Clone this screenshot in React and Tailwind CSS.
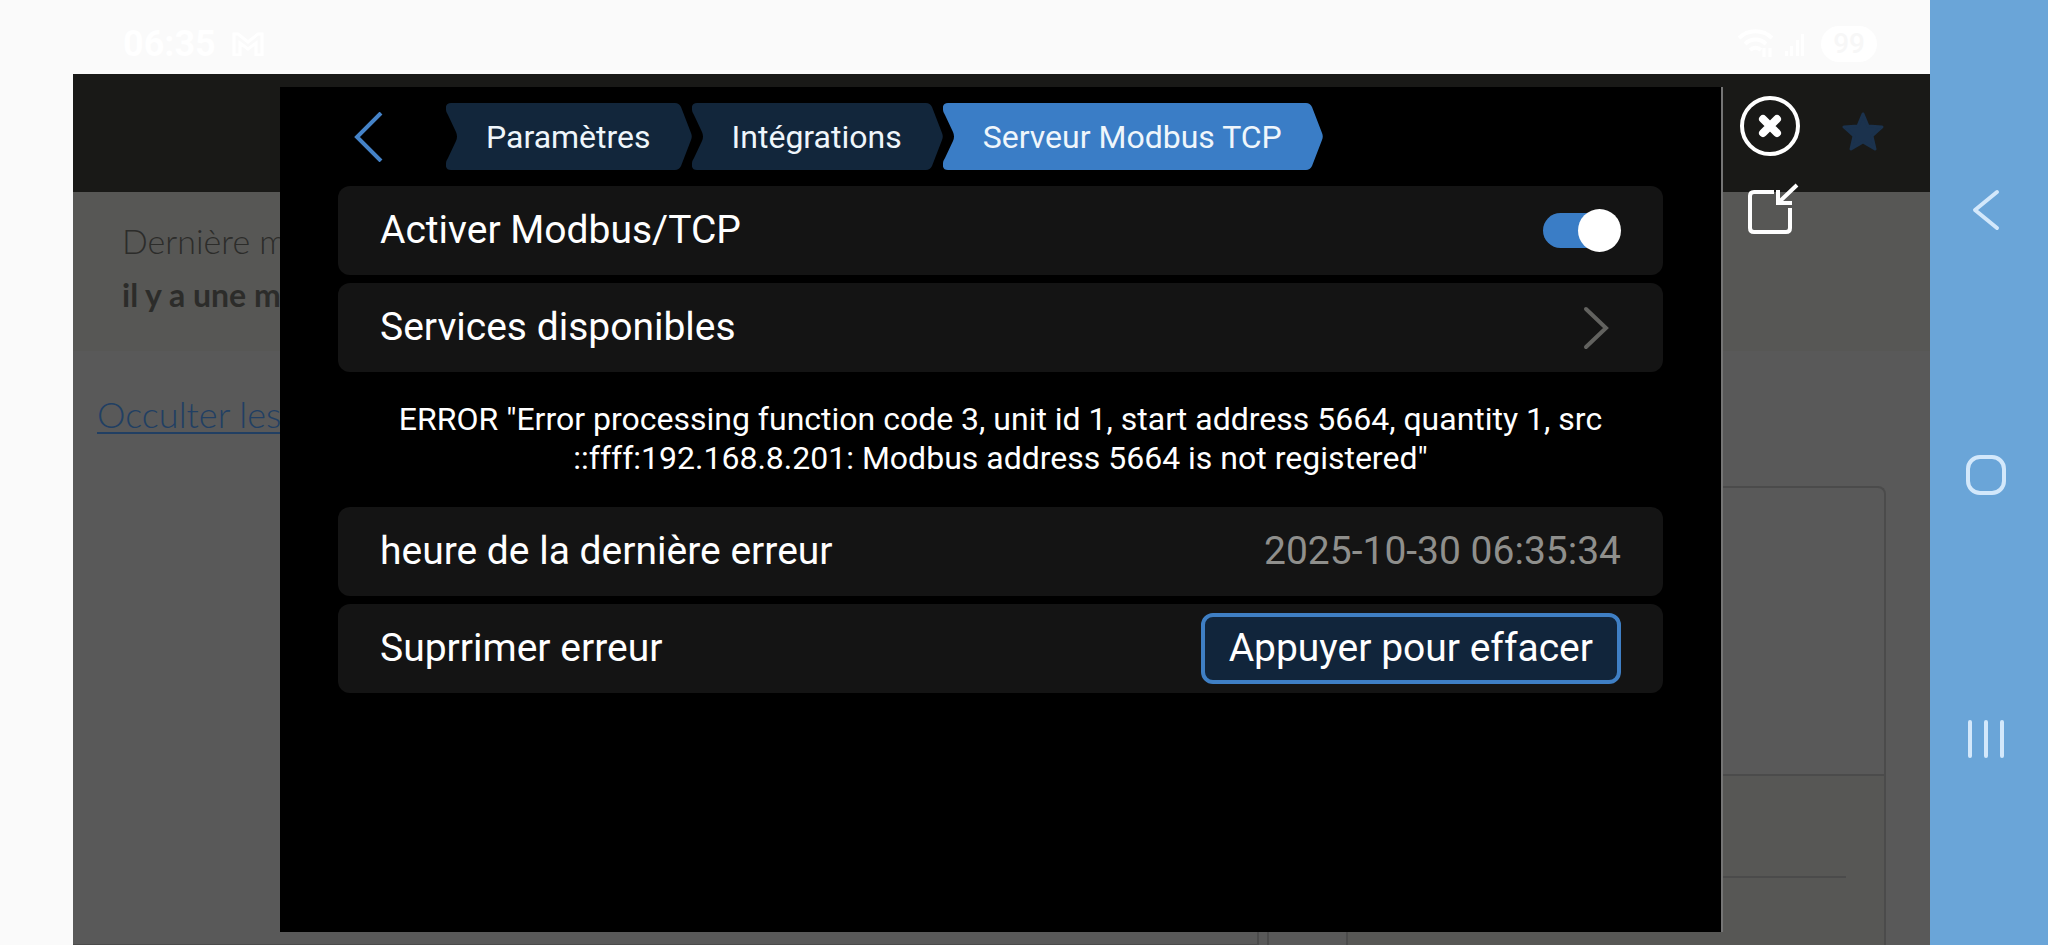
import { useState } from 'react';

const CRUMBS = ['Paramètres', 'Intégrations', 'Serveur Modbus TCP'];

const ERROR_TEXT =
  'ERROR "Error processing function code 3, unit id 1, start address 5664, quantity 1, src ::ffff:192.168.8.201: Modbus address 5664 is not registered"';

export default function App() {
  return (
    <div className="flex h-screen overflow-hidden bg-[#fafafa] font-[Roboto,sans-serif] text-white">
      <div className="flex min-w-0 flex-1 flex-col">
        <StatusBar />
        <main className="relative ml-[73px] min-h-0 flex-1 overflow-hidden">
          <PortalPage />
          <div className="absolute inset-0 flex pt-[13px] pb-[13px] pl-[207px]">
            <SettingsDialog />
            <WindowControls />
          </div>
        </main>
      </div>
      <AndroidNav />
    </div>
  );
}

function StatusBar() {
  return (
    <header className="flex h-[74px] shrink-0 items-center justify-between pt-3.5 pr-[53px] pl-[123px]">
      <div className="flex items-center gap-4">
        <span className="text-[36px] leading-8 font-bold">06:35</span>
        <svg className="h-6 w-8" viewBox="0 0 32 24" fill="none" stroke="currentColor" strokeWidth="3">
          <path d="M2 23V2h4l10 8 10-8h4v21h-6V11l-8 6-8-6v12z" />
        </svg>
      </div>
      <div className="flex items-center">
        <svg className="h-8 w-10" viewBox="0 0 40 32" fill="none" stroke="currentColor" strokeWidth="4">
          <path d="M2 10c9-9 24-9 33 0M8 16c6-6 15-6 21 0M13 22c3-3 8-3 11 0" />
          <path d="M27 20v9M33 29v-9" strokeWidth="3" />
        </svg>
        <svg className="ml-2 h-6 w-5" viewBox="0 0 20 24" fill="currentColor">
          <path d="M0 19h3v5H0zM5 14h3v10H5zM11 8h3v16h-3zM16 2h3v22h-3z" />
        </svg>
        <span className="ml-4 rounded-full bg-white px-3 py-0.5 text-[28px] leading-8 font-medium text-[#f7f7f7]">
          99
        </span>
      </div>
    </header>
  );
}

// Dimmed page behind the dialog
function PortalPage() {
  return (
    <div className="flex h-full flex-col bg-[#595959] font-[Lato,sans-serif] text-[32px] text-[#2c2c2a]">
      <div className="flex h-[118px] shrink-0 items-center justify-end bg-[#191917] pr-[46px] pb-1">
        <svg className="h-10 w-[42px]" viewBox="0 0 42 40" fill="#1b324d" stroke="#1b324d" strokeWidth="3" strokeLinejoin="round">
          <path d="M21 3l5 12 14 1-10 9 3 13-12-7-12 7 3-13L2 16l14-1z" />
        </svg>
      </div>
      <div className="h-[159px] shrink-0 bg-[#575755] pt-[22px] pl-[49px] leading-[54px]">
        <p className="text-[34px] leading-[54px] font-light">Dernière m</p>
        <p className="font-bold">il y a une m</p>
      </div>
      <div className="h-[94px] shrink-0 pt-9 pl-6 text-[36px] leading-[54px]">
        <a href="#occulter" className="font-light text-[#213f63] underline decoration-2 underline-offset-4">
          Occulter les
        </a>
      </div>
      <div className="mt-[41px] flex min-h-0 flex-1 justify-end gap-2 pr-11">
        <div className="flex-1 border-r-2 border-b border-[#4b4b4b]" />
        <div className="flex w-[619px] rounded-tr-lg border-2 border-b-0 border-[#4b4b4b]">
          <div className="w-[77px]" />
          <div className="flex flex-1 flex-col border-l-2 border-[#4b4b4b]">
            <div className="h-[286px]" />
            <div className="flex-1 border-t-2 border-[#4b4b4b] bg-[#575755] pr-[38px]">
              <div className="h-[102px] border-b-2 border-[#4b4b4b]" />
            </div>
          </div>
        </div>
      </div>
    </div>
  );
}

function SettingsDialog() {
  const [enabled, setEnabled] = useState(true);

  return (
    <section role="dialog" aria-label="Serveur Modbus TCP" className="min-w-0 flex-1 border-r-2 border-[#757575] bg-black px-[58px] pt-4">
      <nav className="flex items-center">
        <button type="button" aria-label="Retour" className="mr-[60px] ml-4 text-[#4583c8]">
          <svg className="h-[50px] w-8" viewBox="0 0 32 50" fill="none" stroke="currentColor" strokeWidth="4">
            <path d="M27 1L3 25l24 24" />
          </svg>
        </button>
        {CRUMBS.map((name, i) => (
          <Crumb key={name} name={name} active={i === CRUMBS.length - 1} />
        ))}
      </nav>

      <div className="mt-4 space-y-2">
        <Row>
          <label htmlFor="modbus-enabled">Activer Modbus/TCP</label>
          <span className="relative flex h-[43px] w-[78px] items-center">
            <input
              id="modbus-enabled"
              type="checkbox"
              checked={enabled}
              onChange={(e) => setEnabled(e.target.checked)}
              className="peer h-[35px] w-[70px] cursor-pointer appearance-none rounded-full bg-[#444] checked:bg-[#3a7dc6]"
            />
            <span className="pointer-events-none absolute left-0 size-[43px] rounded-full bg-white peer-checked:right-0 peer-checked:left-auto" />
          </span>
        </Row>
        <button type="button" className="block w-full text-left">
          <Row>
            <span>Services disponibles</span>
            <svg className="mr-3 h-11 w-[26px]" viewBox="0 0 26 44" fill="none" stroke="#62625f" strokeWidth="4" strokeLinecap="round">
              <path d="M3 3l20 19L3 41" />
            </svg>
          </Row>
        </button>
      </div>

      <p className="px-[43px] pt-7 pb-[29px] text-center text-[32px] leading-[39px]">{ERROR_TEXT}</p>

      <div className="space-y-2">
        <Row>
          <span>heure de la dernière erreur</span>
          <time dateTime="2025-10-30T06:35:34" className="text-[#8f8f8c]">
            2025-10-30 06:35:34
          </time>
        </Row>
        <Row>
          <span>Suprrimer erreur</span>
          <button type="button" className="h-[71px] rounded-xl border-4 border-[#3f7fc4] bg-[#11253b] px-6">
            Appuyer pour effacer
          </button>
        </Row>
      </div>
    </section>
  );
}

function Row({ children }) {
  return (
    <div className="flex h-[89px] items-center justify-between rounded-xl bg-[#141414] px-[42px] text-[39px]">
      {children}
    </div>
  );
}

// Arrow shaped breadcrumb: notched left cap, flat middle, pointed right cap
function Crumb({ name, active }) {
  return (
    <a href="#menu" className={`flex h-[67px] ${active ? 'text-[#3a7dc6]' : 'text-[#12263b]'}`}>
      <svg className="h-full w-4" viewBox="0 0 16 67" fill="currentColor">
        <path d="M16 0H5Q-1 0 0 7Q0 9 2 12L10 29Q12 33.500 10 38L2 55Q0 58 0 60Q-1 67 5 67H16z" />
      </svg>
      <span className="flex items-center bg-current px-6 text-[32px]">
        <span className="text-[#eff6fb]">{name}</span>
      </span>
      <svg className="h-full w-[17px]" viewBox="0 0 17 67" fill="currentColor">
        <path d="M0 0Q4 0 6 4L16 30Q17.500 33.500 16 37L6 63Q4 67 0 67z" />
      </svg>
    </a>
  );
}

function WindowControls() {
  return (
    <div className="flex w-[207px] shrink-0 flex-col items-start gap-[26px] pt-2 pl-4">
      <button type="button" aria-label="Fermer">
        <svg className="size-[62px]" viewBox="0 0 62 62" fill="none" stroke="currentColor">
          <circle cx="31" cy="31" r="28" strokeWidth="4" />
          <path d="M24 24l14 14M38 24L24 38" strokeWidth="8" strokeLinecap="round" />
        </svg>
      </button>
      <button type="button" aria-label="Réduire" className="ml-2">
        <svg className="h-[52px] w-[54px]" viewBox="0 0 54 52" fill="none" stroke="currentColor" strokeWidth="4">
          <path d="M27 9H7Q3 9 3 13V45Q3 49 7 49H39Q43 49 43 45V25" />
          <path d="M50 2L31 20M31 7V20H45" />
        </svg>
      </button>
    </div>
  );
}

function AndroidNav() {
  return (
    <nav className="flex w-[118px] shrink-0 flex-col items-center justify-between bg-[#6aa5d8] pt-[185px] pr-1.5 pb-[181px] text-[#d3e8fb]">
      <button type="button" aria-label="Précédent">
        <svg className="size-[50px]" viewBox="0 0 50 50" fill="none" stroke="currentColor" strokeWidth="4" strokeLinecap="round" strokeLinejoin="round">
          <path d="M36 7L14 25l22 18" />
        </svg>
      </button>
      <button type="button" aria-label="Accueil">
        <svg className="size-[50px]" viewBox="0 0 50 50" fill="none" stroke="currentColor" strokeWidth="4">
          <rect x="7" y="7" width="36" height="36" rx="12" />
        </svg>
      </button>
      <button type="button" aria-label="Applications récentes">
        <svg className="size-[50px]" viewBox="0 0 50 50" fill="none" stroke="currentColor" strokeWidth="4" strokeLinecap="round">
          <path d="M9 8v34M25 8v34M41 8v34" />
        </svg>
      </button>
    </nav>
  );
}
